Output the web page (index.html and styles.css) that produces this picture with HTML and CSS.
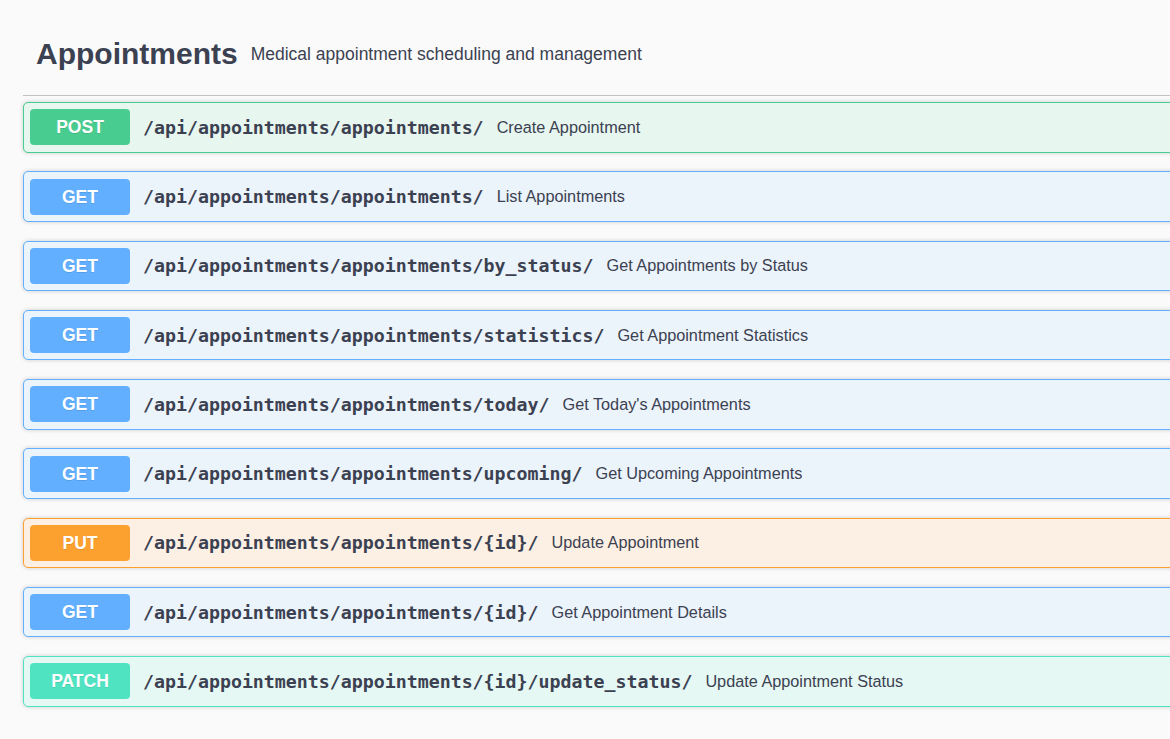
FILE: index.html
```html
<!DOCTYPE html>
<html>
<head>
<meta charset="utf-8">
<link rel="stylesheet" href="styles.css">
</head>
<body>
<div class="wrap">
  <h3 class="tag">
    <span class="tag-title">Appointments</span>
    <small class="tag-desc">Medical appointment scheduling and management</small>
  </h3>
  <div class="ops">
    <div class="op post"><span class="method">POST</span><span class="path">/api/appointments/appointments/</span><span class="desc">Create Appointment</span></div>
    <div class="op get"><span class="method">GET</span><span class="path">/api/appointments/appointments/</span><span class="desc">List Appointments</span></div>
    <div class="op get"><span class="method">GET</span><span class="path">/api/appointments/appointments/by_status/</span><span class="desc">Get Appointments by Status</span></div>
    <div class="op get"><span class="method">GET</span><span class="path">/api/appointments/appointments/statistics/</span><span class="desc">Get Appointment Statistics</span></div>
    <div class="op get"><span class="method">GET</span><span class="path">/api/appointments/appointments/today/</span><span class="desc">Get Today's Appointments</span></div>
    <div class="op get"><span class="method">GET</span><span class="path">/api/appointments/appointments/upcoming/</span><span class="desc">Get Upcoming Appointments</span></div>
    <div class="op put"><span class="method">PUT</span><span class="path">/api/appointments/appointments/{id}/</span><span class="desc">Update Appointment</span></div>
    <div class="op get"><span class="method">GET</span><span class="path">/api/appointments/appointments/{id}/</span><span class="desc">Get Appointment Details</span></div>
    <div class="op patch"><span class="method">PATCH</span><span class="path">/api/appointments/appointments/{id}/update_status/</span><span class="desc">Update Appointment Status</span></div>
  </div>
</div>
</body>
</html>
```
FILE: styles.css
```css
html, body {
  margin: 0;
  padding: 0;
  background: #fafafa;
  overflow: hidden;
  width: 1170px;
  height: 739px;
}
body {
  font-family: "Liberation Sans", Arial, sans-serif;
  color: #3b4151;
}
.wrap {
  width: 1200px;
  padding: 12px 0 0 23px;
}
.tag {
  display: flex;
  align-items: center;
  height: 83px;
  margin: 0 0 6px;
  padding: 0 25px 0 13px;
  border-bottom: 1px solid rgba(59, 65, 81, 0.3);
  font-size: 30px;
  font-weight: 700;
}
.tag-title {
  line-height: 1.15;
  position: relative;
  top: 1px;
}
.tag-desc {
  font-size: 17.5px;
  font-weight: 400;
  padding: 0 13px;
  position: relative;
  top: 1px;
}
.ops {
  display: flex;
  flex-direction: column;
  gap: 18.75px;
}
.op {
  display: flex;
  align-items: center;
  height: 48.5px;
  padding: 0 6px;
  border: 1px solid;
  border-radius: 5px;
  box-shadow: 0 0 4px rgba(0, 0, 0, 0.19);
}
.method {
  flex: none;
  width: 100px;
  height: 36px;
  line-height: 36px;
  border-radius: 4px;
  text-align: center;
  color: #fff;
  font-size: 17.5px;
  font-weight: 700;
  text-shadow: 0 1px 0 rgba(0, 0, 0, 0.1);
}
.path {
  padding: 0 13px 0 13px;
  font-family: "DejaVu Sans Mono", monospace;
  font-size: 18.25px;
  font-weight: 700;
  color: #3b4151;
  white-space: nowrap;
}
.desc {
  font-size: 16.25px;
  color: #3b4151;
  white-space: nowrap;
}
.post { background: #e7f6ef; border-color: #49cc90; }
.post .method { background: #49cc90; }
.get { background: #ebf3fb; border-color: #61affe; }
.get .method { background: #61affe; }
.put { background: #fcf0e4; border-color: #fca130; }
.put .method { background: #fca130; }
.patch { background: #e6f8f4; border-color: #50e3c2; }
.patch .method { background: #50e3c2; }
```
